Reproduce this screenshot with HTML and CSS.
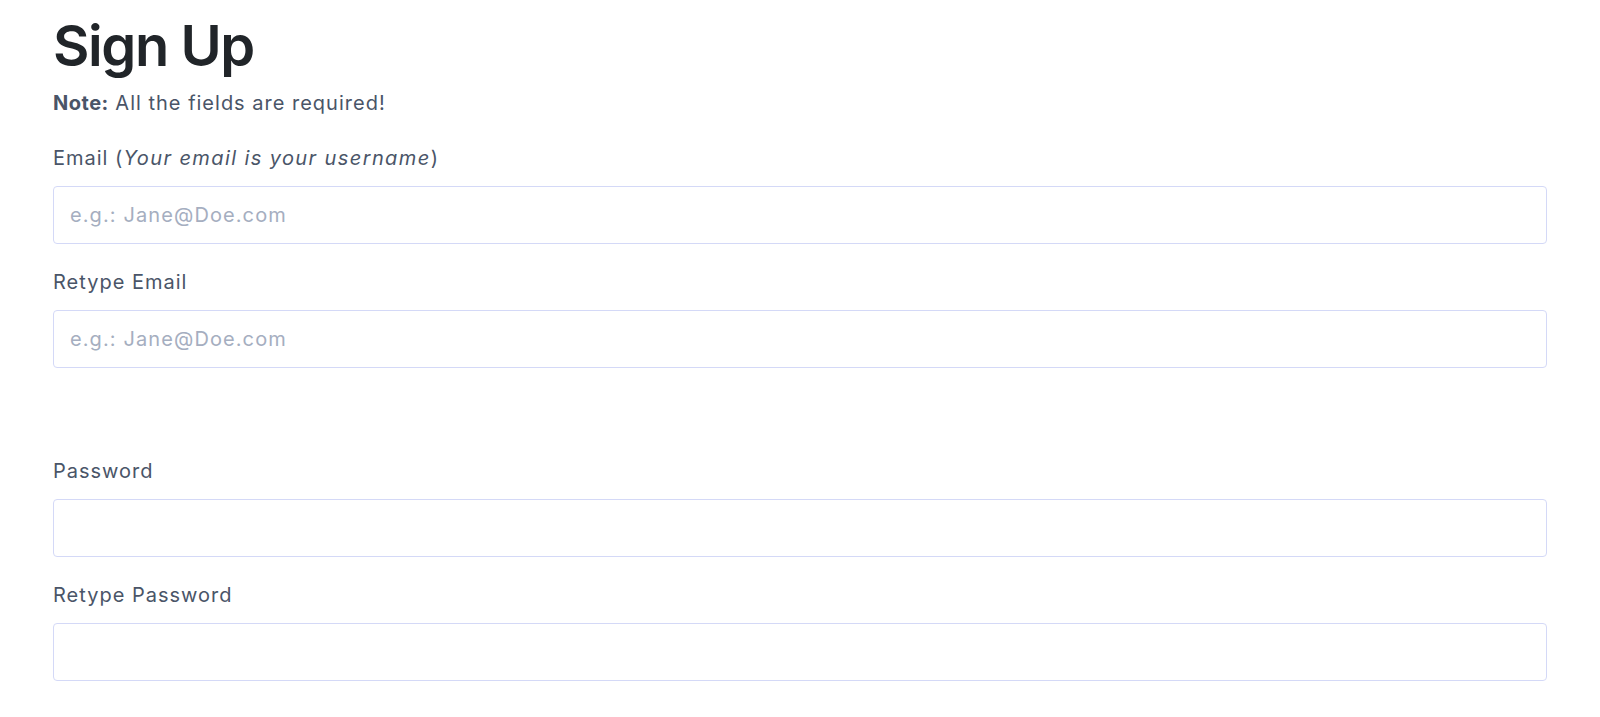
FILE: index.html
```html
<!DOCTYPE html>
<html>
<head>
    <title>Sign Up</title>
    <link rel="stylesheet" href="styles.css">
</head>
<body>
    <div class="container">
        <h1>Sign Up</h1>
        <p class="note"><strong>Note:</strong> All the fields are required!</p>

        <div class="group">
            <div class="field">
                <label for="email">Email (<em>Your email is your username</em>)</label>
                <input id="email" type="email" placeholder="e.g.: Jane@Doe.com">
            </div>
            <div class="field">
                <label for="email2">Retype Email</label>
                <input id="email2" type="email" placeholder="e.g.: Jane@Doe.com">
            </div>
        </div>

        <div class="group group-password">
            <div class="field">
                <label for="password">Password</label>
                <input id="password" type="password">
            </div>
            <div class="field">
                <label for="password2">Retype Password</label>
                <input id="password2" type="password">
            </div>
        </div>
    </div>
</body>
</html>
```

FILE: styles.css
```css
body {
    margin: 0;
    background: #fff;
    font-family: Inter, "Open Sans", sans-serif;
    color: #4a5568;
}

.container {
    padding: 0 53px;
}

h1 {
    margin: 0;
    padding-top: 14px;
    font-size: 56px;
    line-height: 64px;
    font-weight: 600;
    color: #212529;
    letter-spacing: -1.4px;
}

.note {
    margin: 11px 0 3px;
    font-size: 20px;
    line-height: 28px;
    letter-spacing: 1px;
    color: #4a5568;
}

.note strong {
    font-weight: 700;
    letter-spacing: 0.5px;
}

.field {
    display: flex;
    flex-direction: column;
}

label {
    font-size: 20px;
    line-height: 28px;
    letter-spacing: 1px;
    color: #4a5568;
    margin-top: 24px;
    margin-bottom: 14px;
}

label em {
    font-style: italic;
    letter-spacing: 1.4px;
}

input {
    box-sizing: border-box;
    height: 58px;
    width: 100%;
    padding: 0 16px;
    border: 1px solid #d4d9f7;
    border-radius: 4px;
    font-family: inherit;
    font-size: 20px;
    letter-spacing: 1.1px;
    color: #4a5568;
    outline: none;
}

input::placeholder {
    color: #a5aec0;
}

.group-password {
    margin-top: 65px;
}
```
